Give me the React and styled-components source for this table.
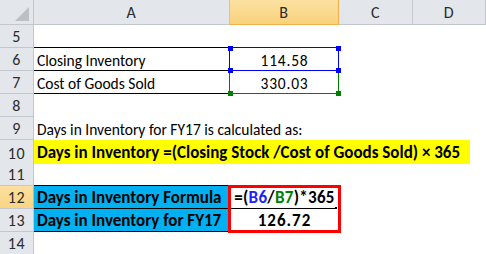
import React from "react";
import styled, { createGlobalStyle, css } from "styled-components";

const COLS = "34px 196px 109px 74px 73px";
const FONT = `Carlito, Lato, "Liberation Sans", sans-serif`;

const GlobalStyle = createGlobalStyle`
  html, body {
    margin: 0;
    padding: 0;
    background: #ffffff;
  }
  body {
    font-family: ${FONT};
    font-size: 15.5px;
    color: #000;
  }
`;

const Sheet = styled.div`
  width: 486px;
  height: 254px;
  overflow: hidden;
  display: flex;
  flex-direction: column;
  background: #fff;
`;

const HeaderRow = styled.div`
  display: grid;
  grid-template-columns: ${COLS};
  height: 25px;
  flex: none;
`;

const Row = styled.div`
  display: grid;
  grid-template-columns: ${COLS};
  height: 23px;
  flex: none;
`;

const headBase = css`
  box-sizing: border-box;
  display: flex;
  align-items: center;
  justify-content: center;
  border-right: 1px solid #c3c7cd;
  border-bottom: 1px solid #c3c7cd;
  color: #2b2b2b;
  font-size: 16px;
  letter-spacing: 0.6px;
  line-height: 1;
`;

const Corner = styled.div`
  ${headBase};
  background: #e3e6ea;
  align-items: flex-end;
  justify-content: flex-end;
  padding: 0 4px 3px 0;
`;

const CornerMark = styled.span`
  width: 0;
  height: 0;
  border-left: 14px solid transparent;
  border-bottom: 14px solid #bcc0c6;
`;

const ColHead = styled.div`
  ${headBase};
  padding-top: 1px;
  background: ${(p) =>
    p.$active ? "linear-gradient(#fbe1a0, #f8d27c)" : "#e3e6ea"};
  border-bottom-color: ${(p) => (p.$active ? "#f1b04a" : "#c3c7cd")};
  border-right-color: ${(p) => (p.$active ? "#f1b04a" : "#c3c7cd")};
`;

const RowHead = styled.div`
  ${headBase};
  padding-top: 1px;
  background: ${(p) =>
    p.$active ? "linear-gradient(#fce0a0, #f9d582)" : "#e3e6ea"};
  border-right-color: ${(p) => (p.$active ? "#f1b04a" : "#c3c7cd")};
`;

const Cell = styled.div`
  box-sizing: border-box;
  position: relative;
  display: flex;
  align-items: flex-end;
  justify-content: ${(p) => (p.$center ? "center" : "flex-start")};
  grid-column: span ${(p) => p.$span || 1};
  padding: 0 3px 2px;
  border-bottom: 1px solid ${(p) => p.$under || "transparent"};
  background: ${(p) => p.$fill || "transparent"};
  font-size: ${(p) => p.$size || 15.5}px;
  font-weight: ${(p) => (p.$bold ? 700 : 400)};
  letter-spacing: ${(p) => p.$track || 0}px;
  white-space: nowrap;
  line-height: 1;
`;

const Band = styled.div`
  box-sizing: border-box;
  align-self: stretch;
  display: flex;
  align-items: flex-end;
  height: 24px;
  padding: 0 10px 3px 3px;
  margin-left: -3px;
  background: #ffff00;
  font-size: 17px;
  font-weight: 700;
`;

const Ref = styled.span`
  color: ${(p) => p.$tone};
`;

const Frame = styled.div`
  position: absolute;
  box-sizing: border-box;
  left: -1px;
  top: -1px;
  width: 110px;
  height: 24px;
  border: 1px solid ${(p) => p.$tone};
  z-index: ${(p) => p.$layer};
  pointer-events: none;
`;

const Handle = styled.span`
  position: absolute;
  width: 5px;
  height: 5px;
  background: ${(p) => p.$tone};
  ${(p) => (p.$v === "top" ? "top: -2px;" : "bottom: -3px;")}
  ${(p) => (p.$h === "left" ? "left: -2px;" : "right: -3px;")}
`;

const ResultBox = styled.div`
  position: absolute;
  box-sizing: border-box;
  left: -2px;
  top: -1px;
  width: 113px;
  height: 48px;
  border: 3px solid #ff0000;
  z-index: 4;
  pointer-events: none;
`;

const Divider = styled.span`
  position: absolute;
  left: 0;
  right: 2px;
  bottom: -1px;
  height: 1px;
  background: #000;
  &::after {
    content: "";
    position: absolute;
    right: 0;
    top: -1px;
    width: 2px;
    height: 2px;
    background: #000;
  }
`;

function SelectionFrame({ tone, layer, corners }) {
  return (
    <Frame $tone={tone} $layer={layer}>
      {corners.map(([v, h]) => (
        <Handle key={v + h} $tone={tone} $v={v} $h={h} />
      ))}
    </Frame>
  );
}

const ALL_CORNERS = [
  ["top", "left"],
  ["top", "right"],
  ["bottom", "left"],
  ["bottom", "right"],
];

export default function App() {
  return (
    <>
      <GlobalStyle />
      <Sheet>
        <HeaderRow>
          <Corner>
            <CornerMark />
          </Corner>
          <ColHead>A</ColHead>
          <ColHead $active>B</ColHead>
          <ColHead>C</ColHead>
          <ColHead>D</ColHead>
        </HeaderRow>

        <Row>
          <RowHead>5</RowHead>
          <Cell $under="#000" />
          <Cell />
          <Cell />
          <Cell />
        </Row>

        <Row>
          <RowHead>6</RowHead>
          <Cell $under="#000">Closing Inventory</Cell>
          <Cell $center $track={0.8}>
            114.58
            <SelectionFrame tone="#0000ff" layer={3} corners={ALL_CORNERS} />
          </Cell>
          <Cell />
          <Cell />
        </Row>

        <Row>
          <RowHead>7</RowHead>
          <Cell $under="#000">Cost of Goods Sold</Cell>
          <Cell $center $track={0.8}>
            330.03
            <SelectionFrame
              tone="#008000"
              layer={2}
              corners={[
                ["bottom", "left"],
                ["bottom", "right"],
              ]}
            />
          </Cell>
          <Cell />
          <Cell />
        </Row>

        <Row>
          <RowHead>8</RowHead>
          <Cell $span={4} />
        </Row>

        <Row>
          <RowHead>9</RowHead>
          <Cell $span={4}>Days in Inventory for FY17 is calculated as:</Cell>
        </Row>

        <Row>
          <RowHead>10</RowHead>
          <Cell $span={4}>
            <Band>Days in Inventory =(Closing Stock /Cost of Goods Sold) × 365</Band>
          </Cell>
        </Row>

        <Row>
          <RowHead>11</RowHead>
          <Cell $under="#000" />
          <Cell />
          <Cell />
          <Cell />
        </Row>

        <Row>
          <RowHead $active>12</RowHead>
          <Cell $fill="#00b0f0" $under="#000" $bold $size={17}>
            Days in Inventory Formula
          </Cell>
          <Cell $center $bold $size={17} $track={0.3}>
            =(<Ref $tone="#1f1fff">B6</Ref>/<Ref $tone="#008000">B7</Ref>)*365
            <Divider />
            <ResultBox />
          </Cell>
          <Cell />
          <Cell />
        </Row>

        <Row>
          <RowHead>13</RowHead>
          <Cell $fill="#00b0f0" $under="#000" $bold $size={17}>
            Days in Inventory for FY17
          </Cell>
          <Cell $center $bold $size={17} $track={1}>
            126.72
          </Cell>
          <Cell />
          <Cell />
        </Row>

        <Row>
          <RowHead>14</RowHead>
          <Cell $span={4} />
        </Row>
      </Sheet>
    </>
  );
}
